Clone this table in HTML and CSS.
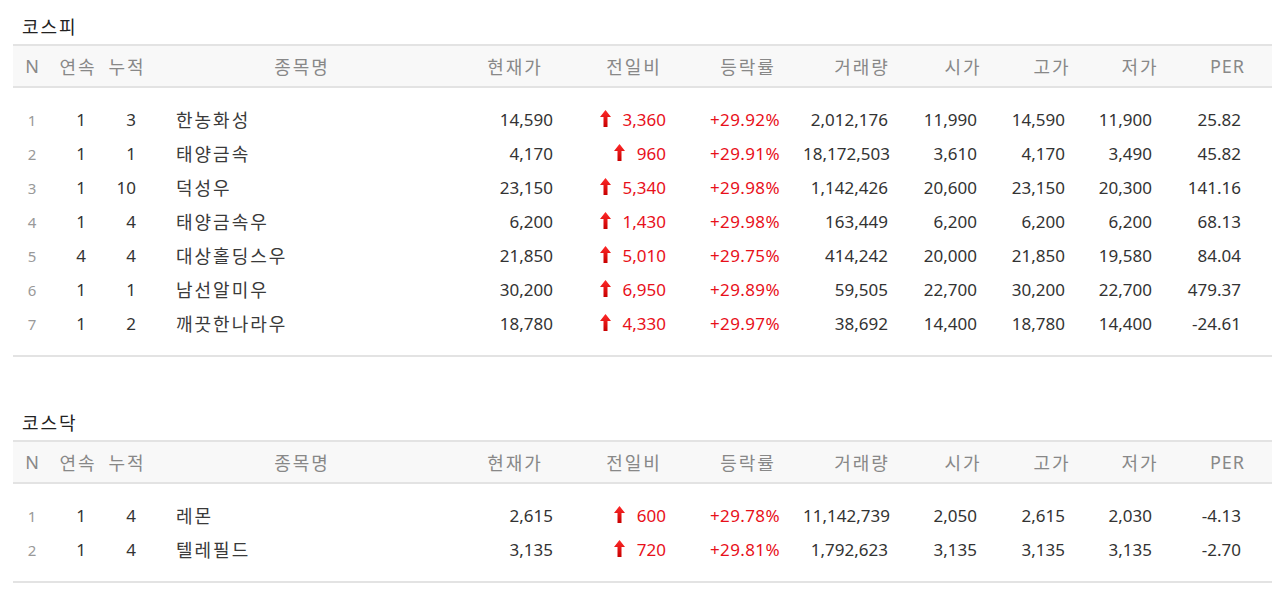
FILE: index.html
```html
<!DOCTYPE html>
<html lang="ko">
<head>
<meta charset="utf-8">
<title>상한가 종목</title>
<link rel="stylesheet" href="styles.css">
</head>
<body>
<svg width="0" height="0" class="defs" aria-hidden="true">
  <defs>
    <linearGradient id="ug" x1="0" y1="0" x2="0" y2="1">
      <stop offset="0" stop-color="#ff2a2a"/>
      <stop offset="1" stop-color="#c80000"/>
    </linearGradient>
    <symbol id="up" viewBox="0 0 11 17">
      <path d="M5.5 0 L11 7 L7.5 7 L7.5 17 L3.5 17 L3.5 7 L0 7 Z" fill="url(#ug)"/>
    </symbol>
  </defs>
</svg>

<section class="market">
  <h2 class="market-title">코스피</h2>
  <div class="grid head">
    <div>N</div><div>연속</div><div>누적</div><div>종목명</div><div>현재가</div><div>전일비</div><div>등락률</div><div>거래량</div><div>시가</div><div>고가</div><div>저가</div><div>PER</div>
  </div>
  <div class="body">
    <div class="grid row"><div class="n">1</div><div class="c2">1</div><div class="c3">3</div><div class="name">한농화성</div><div class="price">14,590</div><div class="diff"><svg class="arrow"><use href="#up"/></svg>3,360</div><div class="rate">+29.92%</div><div class="vol">2,012,176</div><div class="open">11,990</div><div class="high">14,590</div><div class="low">11,900</div><div class="per">25.82</div></div>
    <div class="grid row"><div class="n">2</div><div class="c2">1</div><div class="c3">1</div><div class="name">태양금속</div><div class="price">4,170</div><div class="diff"><svg class="arrow"><use href="#up"/></svg>960</div><div class="rate">+29.91%</div><div class="vol">18,172,503</div><div class="open">3,610</div><div class="high">4,170</div><div class="low">3,490</div><div class="per">45.82</div></div>
    <div class="grid row"><div class="n">3</div><div class="c2">1</div><div class="c3">10</div><div class="name">덕성우</div><div class="price">23,150</div><div class="diff"><svg class="arrow"><use href="#up"/></svg>5,340</div><div class="rate">+29.98%</div><div class="vol">1,142,426</div><div class="open">20,600</div><div class="high">23,150</div><div class="low">20,300</div><div class="per">141.16</div></div>
    <div class="grid row"><div class="n">4</div><div class="c2">1</div><div class="c3">4</div><div class="name">태양금속우</div><div class="price">6,200</div><div class="diff"><svg class="arrow"><use href="#up"/></svg>1,430</div><div class="rate">+29.98%</div><div class="vol">163,449</div><div class="open">6,200</div><div class="high">6,200</div><div class="low">6,200</div><div class="per">68.13</div></div>
    <div class="grid row"><div class="n">5</div><div class="c2">4</div><div class="c3">4</div><div class="name">대상홀딩스우</div><div class="price">21,850</div><div class="diff"><svg class="arrow"><use href="#up"/></svg>5,010</div><div class="rate">+29.75%</div><div class="vol">414,242</div><div class="open">20,000</div><div class="high">21,850</div><div class="low">19,580</div><div class="per">84.04</div></div>
    <div class="grid row"><div class="n">6</div><div class="c2">1</div><div class="c3">1</div><div class="name">남선알미우</div><div class="price">30,200</div><div class="diff"><svg class="arrow"><use href="#up"/></svg>6,950</div><div class="rate">+29.89%</div><div class="vol">59,505</div><div class="open">22,700</div><div class="high">30,200</div><div class="low">22,700</div><div class="per">479.37</div></div>
    <div class="grid row"><div class="n">7</div><div class="c2">1</div><div class="c3">2</div><div class="name">깨끗한나라우</div><div class="price">18,780</div><div class="diff"><svg class="arrow"><use href="#up"/></svg>4,330</div><div class="rate">+29.97%</div><div class="vol">38,692</div><div class="open">14,400</div><div class="high">18,780</div><div class="low">14,400</div><div class="per">-24.61</div></div>
  </div>
</section>

<section class="market">
  <h2 class="market-title">코스닥</h2>
  <div class="grid head">
    <div>N</div><div>연속</div><div>누적</div><div>종목명</div><div>현재가</div><div>전일비</div><div>등락률</div><div>거래량</div><div>시가</div><div>고가</div><div>저가</div><div>PER</div>
  </div>
  <div class="body">
    <div class="grid row"><div class="n">1</div><div class="c2">1</div><div class="c3">4</div><div class="name">레몬</div><div class="price">2,615</div><div class="diff"><svg class="arrow"><use href="#up"/></svg>600</div><div class="rate">+29.78%</div><div class="vol">11,142,739</div><div class="open">2,050</div><div class="high">2,615</div><div class="low">2,030</div><div class="per">-4.13</div></div>
    <div class="grid row"><div class="n">2</div><div class="c2">1</div><div class="c3">4</div><div class="name">텔레필드</div><div class="price">3,135</div><div class="diff"><svg class="arrow"><use href="#up"/></svg>720</div><div class="rate">+29.81%</div><div class="vol">1,792,623</div><div class="open">3,135</div><div class="high">3,135</div><div class="low">3,135</div><div class="per">-2.70</div></div>
  </div>
</section>
</body>
</html>
```

FILE: styles.css
```css
html, body {
  margin: 0;
  padding: 0;
  background: #fff;
}

body {
  font-family: "Noto Sans", "Noto Sans CJK KR", sans-serif;
  font-size: 17px;
  color: #333;
  padding: 0 8px 0 13px;
}

.defs {
  position: absolute;
  width: 0;
  height: 0;
}

.market {
  width: 1259px;
  margin-bottom: 39px;
}

.market-title {
  margin: 0;
  padding: 15px 0 5px 9px;
  height: 24px;
  line-height: 24px;
  font-size: 18px;
  font-weight: 400;
  color: #222;
  letter-spacing: 2px;
}

.grid {
  display: grid;
  grid-template-columns: 38px 52px 46px 304px 122px 116px 112px 116px 86px 92px 84px 91px;
  align-items: center;
}

.head {
  height: 40px;
  background: #f8f8f8;
  border-top: 2px solid #e3e3e3;
  border-bottom: 2px solid #e3e3e3;
  color: #888;
  font-size: 18px;
  letter-spacing: 2px;
}

.head > div {
  text-align: center;
  padding-left: 2px;
}

.head > div:last-child {
  letter-spacing: 1px;
}

.body {
  padding: 15px 0 14px;
  border-bottom: 2px solid #e3e3e3;
}

.row {
  height: 34px;
  line-height: 34px;
  white-space: nowrap;
}

.row > div {
  text-align: right;
}

.row > .n {
  text-align: center;
  color: #999;
  font-size: 15px;
}

.row > .c2 { padding-right: 17px; }
.row > .c3 { padding-right: 13px; }

.row > .name {
  text-align: left;
  padding-left: 27px;
  font-size: 18px;
  letter-spacing: 2px;
  color: #3a3a3a;
}

.row > .price { padding-right: 22px; }

.row > .diff {
  padding-right: 25px;
  color: #e8101a;
  display: flex;
  justify-content: flex-end;
  align-items: center;
}

.arrow {
  width: 11px;
  height: 17px;
  margin-right: 12px;
  margin-top: -4px;
}

.row > .rate {
  padding-right: 23px;
  color: #e8101a;
  letter-spacing: 0.4px;
}

.row > .vol { padding-right: 31px; }
.row > .open { padding-right: 28px; }
.row > .high { padding-right: 32px; }
.row > .low { padding-right: 29px; }
.row > .per { padding-right: 31px; }
```
